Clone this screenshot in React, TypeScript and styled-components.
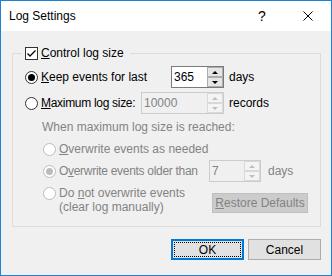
import React from "react";
import styled, { createGlobalStyle, css } from "styled-components";

const GlobalStyle = createGlobalStyle`
  html, body { margin: 0; padding: 0; }
  body {
    font-family: "Liberation Sans", Arial, sans-serif;
    font-size: 12px;
    color: #000;
    background: #fff;
  }
  * { box-sizing: border-box; }
`;

const disabledText = "#838383";

const Window = styled.div`
  width: 332px;
  height: 276px;
  border: 1px solid #1883d7;
  display: flex;
  flex-direction: column;
  background: #f0f0f0;
`;

const TitleBar = styled.div`
  height: 30px;
  background: #fff;
  display: flex;
  align-items: center;
  padding-left: 8px;
`;

const Title = styled.div`
  flex: 1;
  font-size: 12px;
`;

const CaptionButton = styled.div`
  width: 46px;
  height: 30px;
  display: flex;
  align-items: center;
  justify-content: center;
  font-size: 14px;
`;

const Body = styled.div`
  flex: 1;
  padding: 15px 10px 0 11px;
  display: flex;
  flex-direction: column;
`;

const Group = styled.fieldset`
  margin: 0;
  padding: 0 0 12px 9px;
  border: 1px solid #dcdcdc;
  min-width: 0;
  display: flex;
  flex-direction: column;
`;

const Legend = styled.legend`
  padding: 0 6px 0 3px;
  height: 14px;
  line-height: 14px;
  display: flex;
  align-items: center;
`;

const CheckBox = styled.span`
  width: 13px;
  height: 13px;
  border: 1px solid #333;
  background: #fff;
  display: inline-flex;
  align-items: center;
  justify-content: center;
  margin-right: 3px;
`;

const Radio = styled.span<{ $checked?: boolean; $disabled?: boolean }>`
  width: 13px;
  height: 13px;
  flex: none;
  border-radius: 50%;
  border: 1px solid ${(p) => (p.$disabled ? "#bcbcbc" : "#333")};
  background: #fff;
  display: inline-flex;
  align-items: center;
  justify-content: center;
  margin-right: 3px;
  ${(p) =>
    p.$checked &&
    css`
      &::after {
        content: "";
        width: 7px;
        height: 7px;
        border-radius: 50%;
        background: ${p.$disabled ? "#bcbcbc" : "#000"};
      }
    `}
`;

const Row = styled.div<{ $top?: number }>`
  display: flex;
  align-items: center;
  height: 22px;
  margin-top: ${(p) => p.$top ?? 0}px;
  padding-left: 3px;
`;

const Choice = styled.label<{ $disabled?: boolean; $tight?: boolean }>`
  flex: 1;
  min-width: 0;
  white-space: nowrap;
  display: flex;
  align-items: center;
  color: ${(p) => (p.$disabled ? disabledText : "#000")};
  letter-spacing: ${(p) => (p.$tight ? "-0.3px" : "normal")};
`;

const SpinBox = styled.div<{ $width: number; $disabled?: boolean }>`
  flex: none;
  width: ${(p) => p.$width}px;
  height: 22px;
  display: flex;
  border: 1px solid ${(p) => (p.$disabled ? "#cccccc" : "#7a7a7a")};
  background: ${(p) => (p.$disabled ? "#f0f0f0" : "#fff")};
  color: ${(p) => (p.$disabled ? disabledText : "#000")};
`;

const SpinText = styled.div`
  flex: 1;
  padding-left: 2px;
  display: flex;
  align-items: center;
`;

const SpinButtons = styled.div`
  width: 18px;
  display: flex;
  flex-direction: column;
  margin: -1px -1px -1px 0;
  padding: 1px;
`;

const SpinArrow = styled.div<{ $up?: boolean; $disabled?: boolean }>`
  flex: 1;
  border: 1px solid ${(p) => (p.$disabled ? "#d9d9d9" : "#adadad")};
  background: ${(p) => (p.$disabled ? "#f4f4f4" : "#e5e5e5")};
  display: flex;
  align-items: center;
  justify-content: center;
  &::after {
    content: "";
    width: 0;
    height: 0;
    border-left: 3px solid transparent;
    border-right: 3px solid transparent;
    ${(p) =>
      p.$up
        ? css`border-bottom: 3px solid ${p.$disabled ? "#bfbfbf" : "#000"};`
        : css`border-top: 3px solid ${p.$disabled ? "#bfbfbf" : "#000"};`}
  }
`;

const Unit = styled.span<{ $gap: number; $width: number; $disabled?: boolean }>`
  flex: none;
  margin-left: ${(p) => p.$gap}px;
  width: ${(p) => p.$width}px;
  color: ${(p) => (p.$disabled ? disabledText : "#000")};
`;

const SubSection = styled.div`
  padding-left: 18px;
  display: flex;
  flex-direction: column;
`;

const Hint = styled.div`
  height: 14px;
  line-height: 14px;
  margin-top: 6px;
  padding-left: 2px;
  color: ${disabledText};
`;

const MultiRow = styled.div`
  display: flex;
  align-items: flex-end;
  padding-left: 3px;
`;

const MultiChoice = styled.label`
  flex: 1;
  display: flex;
  align-items: flex-start;
  padding-top: 4px;
  line-height: 14px;
  white-space: nowrap;
  color: ${disabledText};
  ${Radio} {
    margin-top: 1px;
  }
`;

const Button = styled.button<{ $primary?: boolean; $disabled?: boolean }>`
  font-family: inherit;
  font-size: 12px;
  width: 73px;
  height: 21px;
  padding: 0;
  background: #e1e1e1;
  border: 1px solid #adadad;
  color: #000;
  position: relative;
  ${(p) =>
    p.$primary &&
    css`
      border: 2px solid #0078d7;
      &::after {
        content: "";
        position: absolute;
        inset: 1px;
        border: 1px dotted #000;
      }
    `}
  ${(p) =>
    p.$disabled &&
    css`
      background: #cccccc;
      border-color: #bfbfbf;
      color: ${disabledText};
    `}
`;

const RestoreButton = styled(Button)`
  flex: none;
  width: 96px;
  height: 20px;
  margin: 0 12px 1px 0;
`;

const Footer = styled.div`
  display: flex;
  justify-content: flex-end;
  gap: 4px;
  margin-top: 12px;
`;

const Spin = ({ value, width, disabled }: { value: string; width: number; disabled?: boolean }) => (
  <SpinBox $width={width} $disabled={disabled}>
    <SpinText>{value}</SpinText>
    <SpinButtons>
      <SpinArrow $up $disabled={disabled} />
      <SpinArrow $disabled={disabled} />
    </SpinButtons>
  </SpinBox>
);

export default function App() {
  return (
    <>
      <GlobalStyle />
      <Window>
        <TitleBar>
          <Title>Log Settings</Title>
          <CaptionButton>?</CaptionButton>
          <CaptionButton>
            <svg width="10" height="10" viewBox="0 0 10 10">
              <path d="M0.5 0.5 L9.5 9.5 M9.5 0.5 L0.5 9.5" stroke="#000" strokeWidth="1" />
            </svg>
          </CaptionButton>
        </TitleBar>
        <Body>
          <Group>
            <Legend>
              <CheckBox>
                <svg width="11" height="11" viewBox="0 0 11 11">
                  <path d="M1.5 5.5 L4 8 L9.5 2.5" stroke="#000" strokeWidth="1.3" fill="none" />
                </svg>
              </CheckBox>
              <span>
                <u>C</u>ontrol log size
              </span>
            </Legend>
            <Row $top={6}>
              <Choice>
                <Radio $checked />
                <span>
                  <u>K</u>eep events for last
                </span>
              </Choice>
              <Spin value="365" width={53} />
              <Unit $gap={5} $width={91}>days</Unit>
            </Row>
            <Row $top={4}>
              <Choice $tight>
                <Radio />
                <span>
                  <u>M</u>aximum log size:
                </span>
              </Choice>
              <Spin value="10000" width={83} disabled />
              <Unit $gap={5} $width={91}>records</Unit>
            </Row>
            <SubSection>
              <Hint>When maximum log size is reached:</Hint>
              <Row $top={4}>
                <Choice $disabled>
                  <Radio $disabled />
                  <span>
                    <u>O</u>verwrite events as needed
                  </span>
                </Choice>
              </Row>
              <Row>
                <Choice $disabled $tight>
                  <Radio $disabled $checked />
                  <span>
                    O<u>v</u>erwrite events older than
                  </span>
                </Choice>
                <Spin value="7" width={52} disabled />
                <Unit $gap={7} $width={52} $disabled>
                  days
                </Unit>
              </Row>
              <MultiRow>
                <MultiChoice>
                  <Radio $disabled />
                  <span>
                    Do <u>n</u>ot overwrite events
                    <br />
                    (clear log manually)
                  </span>
                </MultiChoice>
                <RestoreButton $disabled>
                  <u>R</u>estore Defaults
                </RestoreButton>
              </MultiRow>
            </SubSection>
          </Group>
          <Footer>
            <Button $primary>OK</Button>
            <Button>Cancel</Button>
          </Footer>
        </Body>
      </Window>
    </>
  );
}
